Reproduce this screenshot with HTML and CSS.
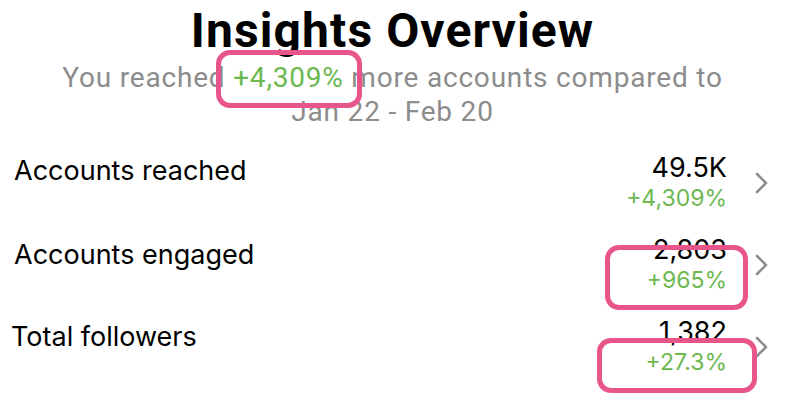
FILE: index.html
```html
<!DOCTYPE html>
<html lang="en">
<head>
<meta charset="utf-8">
<title>Insights Overview</title>
<link rel="stylesheet" href="styles.css">
</head>
<body>
<main class="screen">
  <header class="header">
    <h1 class="title">Insights Overview</h1>
    <p class="subtitle">You reached <span class="green">+4,309%</span> more accounts compared to<br>Jan 22 - Feb 20</p>
  </header>

  <ul class="stats">
    <li class="row">
      <span class="label">Accounts reached</span>
      <span class="values"><span class="num">49.5K</span><span class="pct">+4,309%</span></span>
      <svg class="chev" viewBox="0 0 13 22" width="13" height="22"><path d="M2 2 L11 11 L2 20" fill="none" stroke="#8e8e8e" stroke-width="2.6" stroke-linecap="round" stroke-linejoin="round"/></svg>
    </li>
    <li class="row">
      <span class="label">Accounts engaged</span>
      <span class="values"><span class="num">2,803</span><span class="pct">+965%</span></span>
      <svg class="chev" viewBox="0 0 13 22" width="13" height="22"><path d="M2 2 L11 11 L2 20" fill="none" stroke="#8e8e8e" stroke-width="2.6" stroke-linecap="round" stroke-linejoin="round"/></svg>
    </li>
    <li class="row row-last">
      <span class="label">Total followers</span>
      <span class="values"><span class="num">1,382</span><span class="pct">+27.3%</span></span>
      <svg class="chev" viewBox="0 0 13 22" width="13" height="22"><path d="M2 2 L11 11 L2 20" fill="none" stroke="#8e8e8e" stroke-width="2.6" stroke-linecap="round" stroke-linejoin="round"/></svg>
    </li>
  </ul>

  <div class="mark mark-1"></div>
  <div class="mark mark-2"></div>
  <div class="mark mark-3"></div>
</main>
</body>
</html>
```

FILE: styles.css
```css
html, body {
  margin: 0;
  padding: 0;
  background: #ffffff;
}

.screen {
  position: relative;
  width: 785px;
  height: 403px;
  overflow: hidden;
  font-family: Inter, "Noto Sans", sans-serif;
  color: #000;
}

.header {
  text-align: center;
  padding-top: 3px;
}

.title {
  margin: 0;
  font-family: Roboto, "Liberation Sans", sans-serif;
  font-weight: 700;
  font-size: 48px;
  line-height: 56px;
  letter-spacing: 1.1px;
}

.subtitle {
  margin: 2px 0 0;
  font-family: Roboto, "Liberation Sans", sans-serif;
  font-size: 28px;
  line-height: 34px;
  letter-spacing: 0.8px;
  color: #8c8c8c;
}

.green {
  color: #6cb84f;
}

.stats {
  list-style: none;
  margin: 24px 0 0;
  padding: 0 17px 0 14px;
}

.row {
  display: flex;
  align-items: flex-start;
  height: 82px;
}

.label {
  flex: 1;
  font-size: 27px;
  line-height: 30px;
  padding-top: 3px;
}

.row + .row .label {
  padding-top: 5px;
}

.row-last .label {
  margin-left: -3px;
}

.values {
  display: flex;
  flex-direction: column;
  align-items: flex-end;
}

.num {
  font-size: 27px;
  line-height: 30px;
}

.pct {
  font-size: 23px;
  line-height: 30px;
  color: #6cb84f;
}

.chev {
  margin: 19px 0 0 28px;
  flex: none;
}

.mark {
  position: absolute;
  border: 5px solid #e8558b;
  border-radius: 14px;
  box-sizing: border-box;
}

.mark-1 {
  left: 216px;
  top: 50px;
  width: 146px;
  height: 58px;
}

.mark-2 {
  left: 605px;
  top: 245px;
  width: 143px;
  height: 65px;
}

.mark-3 {
  left: 597px;
  top: 338px;
  width: 160px;
  height: 55px;
}
```
